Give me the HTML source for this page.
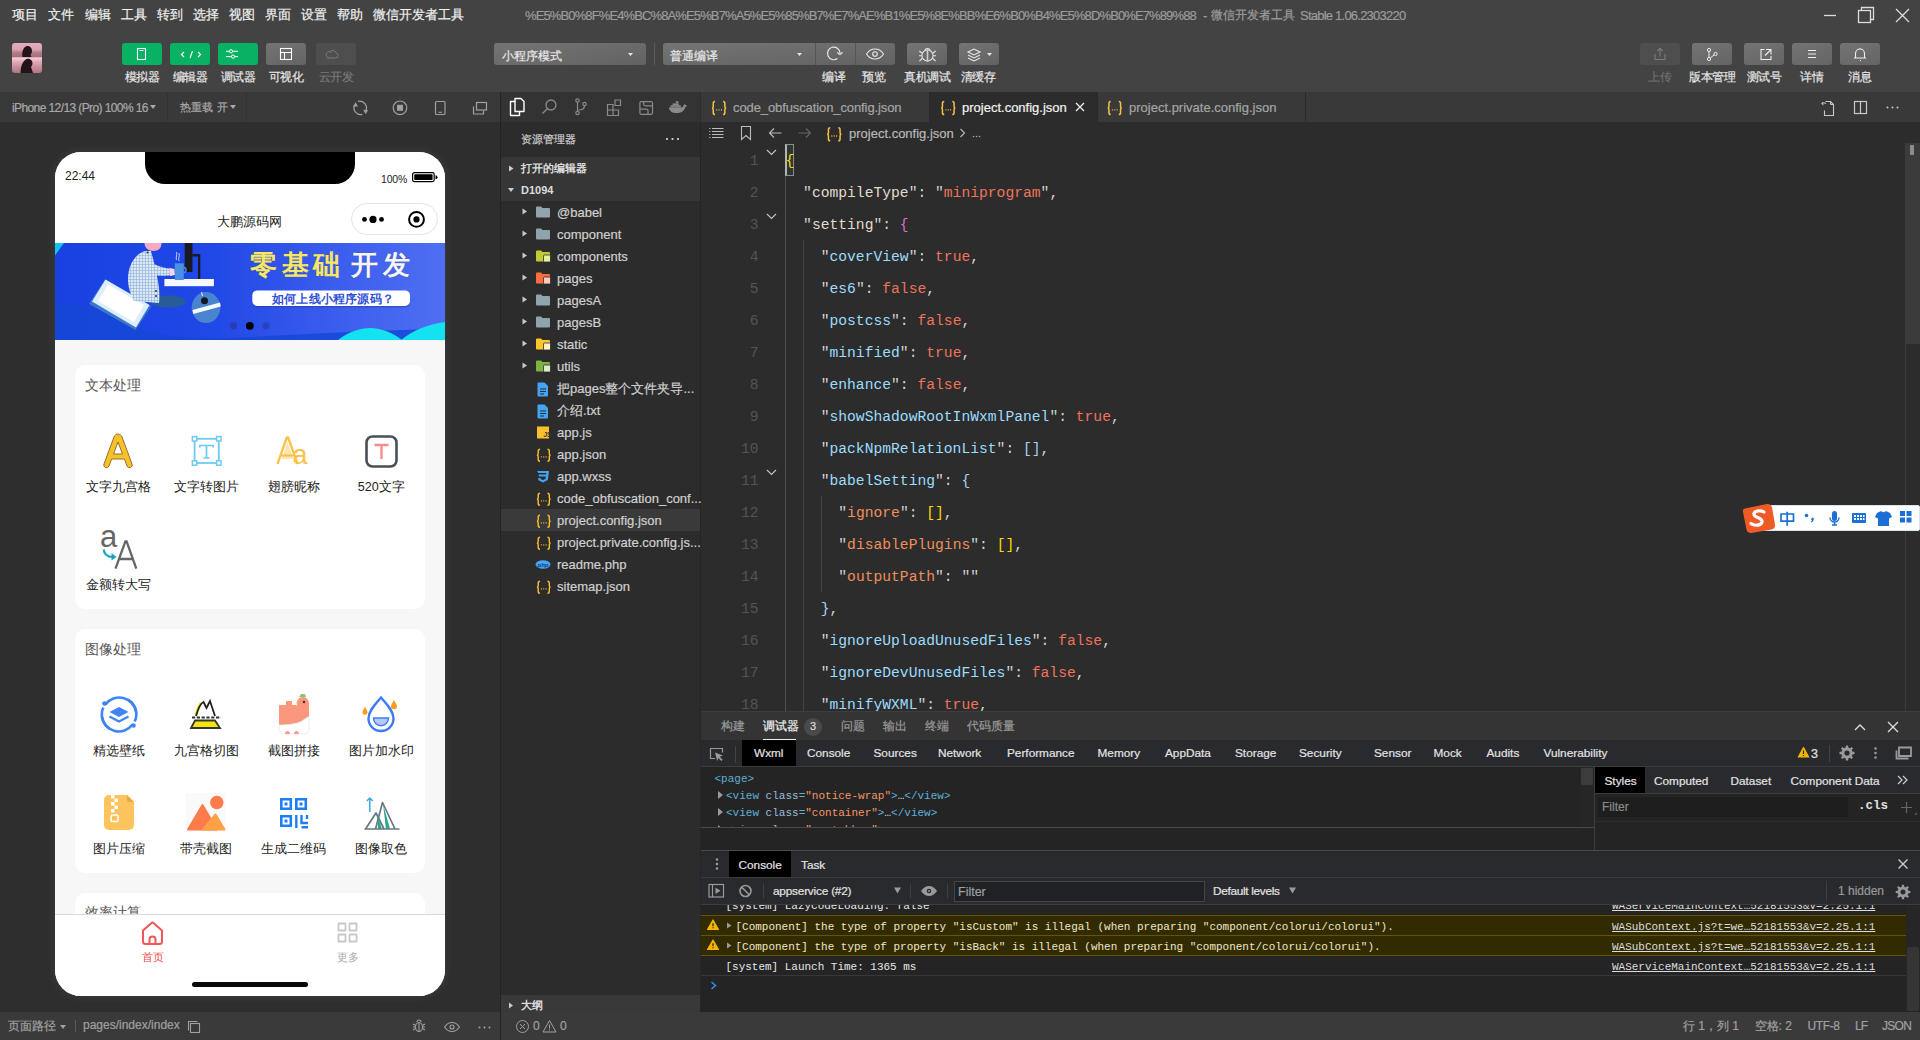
<!DOCTYPE html>
<html><head><meta charset="utf-8">
<style>
*{box-sizing:border-box;margin:0;padding:0}
html,body{width:1920px;height:1040px;overflow:hidden;background:#2c2c2c;font-family:"Liberation Sans",sans-serif;color:#ccc}
.a{position:absolute}
.t{position:absolute;white-space:nowrap;line-height:1;-webkit-text-stroke:.2px currentColor}
svg{position:absolute;overflow:visible}
.t[style*="bold"],.ph .t{-webkit-text-stroke:0}
.cl{width:87.5px;text-align:center;font-size:12.5px;color:#222}
.cl2{position:absolute;white-space:pre;font-family:"Liberation Mono",monospace;font-size:14.67px;line-height:32px;color:#d4d4d4}
.ln{position:absolute;left:700px;width:58.5px;text-align:right;font-family:"Liberation Mono",monospace;font-size:14.67px;line-height:32px;color:#545454}
.dt{position:absolute;top:748px;white-space:nowrap;line-height:1;font-size:11.8px;color:#e3e3e3;-webkit-text-stroke:.2px currentColor}
.wx{position:absolute;white-space:pre;font-family:"Liberation Mono",monospace;font-size:11px;line-height:1}
.tg{color:#5db0d7}.an{color:#9bbbdc}.av{color:#f29766}
.cm{position:absolute;white-space:pre;font-family:"Liberation Mono",monospace;font-size:10.97px;line-height:1;color:#e6e6e6}
.lk{text-decoration:underline;color:#dcdcdc}
.mono{font-family:"Liberation Mono",monospace}
</style></head><body>
<!-- STATUS -->
<div class="a" style="left:0;top:1012px;width:1920px;height:28px;background:#3a3a3a"></div>


<!-- TOP BAR -->
<div class="a" style="left:0;top:0;width:1920px;height:92px;background:#434343"></div>
<div class="t" style="left:12px;top:8px;font-size:13px;color:#f0f0f0;word-spacing:0">
<span style="position:absolute;left:0">项目</span><span style="position:absolute;left:36px">文件</span><span style="position:absolute;left:73px">编辑</span><span style="position:absolute;left:109px">工具</span><span style="position:absolute;left:145px">转到</span><span style="position:absolute;left:181px">选择</span><span style="position:absolute;left:217px">视图</span><span style="position:absolute;left:253px">界面</span><span style="position:absolute;left:289px">设置</span><span style="position:absolute;left:325px">帮助</span><span style="position:absolute;left:361px">微信开发者工具</span>
</div>
<div class="t" id="title" style="left:525px;top:9px;font-size:13px;color:#9c9c9c;letter-spacing:-0.88px">%E5%B0%8F%E4%BC%8A%E5%B7%A5%E5%85%B7%E7%AE%B1%E5%8E%BB%E6%B0%B4%E5%8D%B0%E7%89%88</div>
<div class="t" id="title2" style="left:1203px;top:9px;font-size:13px;color:#9c9c9c">-</div>
<div class="t" style="left:1211px;top:9px;font-size:12px;color:#9c9c9c">微信开发者工具</div>
<div class="t" id="title3" style="left:1300px;top:9px;font-size:13px;color:#9c9c9c;letter-spacing:-0.77px">Stable 1.06.2303220</div>
<!-- window controls -->
<svg style="left:1820px;top:5px" width="100" height="20">
<path d="M4 10.5h12" stroke="#ddd" stroke-width="1.3"/>
<rect x="38.5" y="5.5" width="12" height="12" fill="none" stroke="#ddd" stroke-width="1.3"/>
<path d="M41.5 5.5v-3h12v12h-3" fill="none" stroke="#ddd" stroke-width="1.3"/>
<path d="M76 4l13 13M89 4l-13 13" stroke="#ddd" stroke-width="1.3"/>
</svg>
<!-- avatar -->
<div class="a" style="left:12px;top:43px;width:30px;height:30px;border-radius:3px;overflow:hidden;background:linear-gradient(180deg,#e4b0bd 0%,#d8a2b2 22%,#b27c8a 32%,#a86e7c 45%,#f4d0d0 50%,#e3aab8 62%,#c88e9c 80%,#b27482 100%)">
<svg style="left:0;top:0" width="30" height="30">
<path d="M10.5 14c-1-4 .5-10 4.5-11 3-.5 5 2 5 5 0 2-1 3-1.5 4l1 2z" fill="#241419"/>
<path d="M8.5 30c0-6 2-12 6-14 4-1 6 2 6 4.5 0 1.5-1 2.5-1.5 3.5l2 6z" fill="#241419"/>
</svg>
</div>
<!-- left green buttons -->
<div class="a" style="left:122px;top:43px;width:40px;height:22px;border-radius:3px;background:#08b163"></div>
<div class="a" style="left:170px;top:43px;width:40px;height:22px;border-radius:3px;background:#08b163"></div>
<div class="a" style="left:218px;top:43px;width:40px;height:22px;border-radius:3px;background:#08b163"></div>
<div class="a" style="left:266px;top:43px;width:40px;height:22px;border-radius:3px;background:linear-gradient(160deg,#747474,#646464)"></div>
<div class="a" style="left:316px;top:43px;width:40px;height:22px;border-radius:3px;background:#4e4e4e"></div>
<svg style="left:122px;top:43px" width="240" height="22">
<rect x="15.5" y="5.5" width="8" height="11" fill="none" stroke="#fff" stroke-width="1.1"/><path d="M17.5 7.5h4" stroke="#fff" stroke-width="1"/>
<path d="M62 9l-2.5 2.5 2.5 2.5M76 9l2.5 2.5-2.5 2.5M70.5 8l-2.5 7" fill="none" stroke="#fff" stroke-width="1.1"/>
<circle cx="109" cy="8.3" r="1.6" fill="none" stroke="#fff" stroke-width="1"/><path d="M110.6 8.3h5.4M104 13.6h5.4" stroke="#fff" stroke-width="1"/><circle cx="111" cy="13.6" r="1.6" fill="none" stroke="#fff" stroke-width="1"/><path d="M104 8.3h3.4M112.6 13.6h3.4" stroke="#fff" stroke-width="1"/>
<rect x="158.5" y="5.5" width="11" height="11" fill="none" stroke="#fff" stroke-width="1.1"/><path d="M158.5 9.5h11M162.5 9.5v7" stroke="#fff" stroke-width="1.1"/>
<path d="M205 15h8.5a2.6 2.6 0 0 0 .3-5.2 3.2 3.2 0 0 0-6-.6M207 15a3.2 3.2 0 1 1 2.5-5.5" fill="none" stroke="#7a7a7a" stroke-width="1"/>
</svg>
<div class="t" style="left:122px;top:71px;width:40px;text-align:center;font-size:12px;color:#e6e6e6;letter-spacing:-.5px">模拟器</div>
<div class="t" style="left:170px;top:71px;width:40px;text-align:center;font-size:12px;color:#e6e6e6;letter-spacing:-.5px">编辑器</div>
<div class="t" style="left:218px;top:71px;width:40px;text-align:center;font-size:12px;color:#e6e6e6;letter-spacing:-.5px">调试器</div>
<div class="t" style="left:266px;top:71px;width:40px;text-align:center;font-size:12px;color:#e6e6e6;letter-spacing:-.5px">可视化</div>
<div class="t" style="left:316px;top:71px;width:40px;text-align:center;font-size:12px;color:#777;letter-spacing:-.5px">云开发</div>
<!-- mode dropdown -->
<div class="a" style="left:494px;top:43px;width:152px;height:22px;border-radius:3px;background:linear-gradient(170deg,#747474,#626262)"></div>
<div class="t" style="left:502px;top:49.5px;font-size:12px;color:#e8e8e8">小程序模式</div>
<svg style="left:628px;top:53px" width="8" height="5"><path d="M0 0h5l-2.5 3z" fill="#e8e8e8"/></svg>
<div class="a" style="left:654px;top:43px;width:1px;height:22px;background:#5a5a5a"></div>
<div class="a" style="left:663px;top:43px;width:232px;height:22px;border-radius:3px;background:linear-gradient(175deg,#747474,#626262)"></div>
<div class="a" style="left:815px;top:43px;width:1px;height:22px;background:#555"></div>
<div class="a" style="left:855px;top:43px;width:1px;height:22px;background:#555"></div>
<div class="t" style="left:670px;top:49.5px;font-size:12px;color:#e8e8e8">普通编译</div>
<svg style="left:797px;top:53px" width="8" height="5"><path d="M0 0h5l-2.5 3z" fill="#e8e8e8"/></svg>
<svg style="left:815px;top:43px" width="80" height="22">
<path d="M22.4 15.6A6.3 6.3 0 1 1 25.1 10.2" fill="none" stroke="#e8e8e8" stroke-width="1.2"/><path d="M22.2 9.6l2.8 2 2.6-2.3" fill="none" stroke="#e8e8e8" stroke-width="1.2"/>
<path d="M51.5 11c2.2-3.5 5-5 8.5-5s6.3 1.5 8.5 5c-2.2 3.5-5 5-8.5 5s-6.3-1.5-8.5-5z" fill="none" stroke="#e8e8e8" stroke-width="1.1"/><circle cx="60" cy="11" r="2.3" fill="none" stroke="#e8e8e8" stroke-width="1.1"/>
</svg>
<div class="a" style="left:907px;top:43px;width:40px;height:22px;border-radius:3px;background:linear-gradient(160deg,#747474,#626262)"></div>
<svg style="left:906.5px;top:43px" width="41" height="22">
<circle cx="20.5" cy="12.5" r="5.6" fill="none" stroke="#e8e8e8" stroke-width="1.1"/><path d="M20.5 7.2v10.6" stroke="#d0d0d0" stroke-width="1.6"/><path d="M17.8 7.3a2.8 2.5 0 0 1 5.4 0M14.9 10l-2.6-2M14.9 12.8h-2.9M15.2 15.5l-2.8 2.6M26.1 10l2.6-2M26.1 12.8h2.9M25.8 15.5l2.8 2.6" fill="none" stroke="#e8e8e8" stroke-width="1.1"/>
</svg>
<div class="a" style="left:959px;top:43px;width:40px;height:22px;border-radius:3px;background:linear-gradient(160deg,#747474,#626262)"></div>
<svg style="left:959px;top:43px" width="40" height="22">
<path d="M9 9l6-3 6 3-6 3z" fill="none" stroke="#e8e8e8" stroke-width="1.1"/><path d="M9 12l6 3 6-3M9 15l6 3 6-3" fill="none" stroke="#e8e8e8" stroke-width="1.1"/><path d="M28 10h5l-2.5 3z" fill="#e8e8e8"/>
</svg>
<div class="t" style="left:814px;top:71px;width:40px;text-align:center;font-size:12px;color:#e6e6e6">编译</div>
<div class="t" style="left:854px;top:71px;width:40px;text-align:center;font-size:12px;color:#e6e6e6">预览</div>
<div class="t" style="left:897px;top:71px;width:60px;text-align:center;font-size:12px;color:#e6e6e6;letter-spacing:-.5px">真机调试</div>
<div class="t" style="left:948px;top:71px;width:60px;text-align:center;font-size:12px;color:#e6e6e6;letter-spacing:-.5px">清缓存</div>
<!-- right buttons -->
<div class="a" style="left:1640px;top:43px;width:40px;height:22px;border-radius:3px;background:#4e4e4e"></div>
<div class="a" style="left:1692px;top:43px;width:40px;height:22px;border-radius:3px;background:linear-gradient(160deg,#747474,#646464)"></div>
<div class="a" style="left:1744px;top:43px;width:40px;height:22px;border-radius:3px;background:linear-gradient(160deg,#747474,#646464)"></div>
<div class="a" style="left:1792px;top:43px;width:40px;height:22px;border-radius:3px;background:linear-gradient(160deg,#747474,#646464)"></div>
<div class="a" style="left:1840px;top:43px;width:40px;height:22px;border-radius:3px;background:linear-gradient(160deg,#747474,#646464)"></div>
<svg style="left:1640px;top:43px" width="240" height="22">
<path d="M15 11v5.5h10V11M20 5.5v8M17.3 8l2.7-2.7 2.7 2.7" fill="none" stroke="#7c7c7c" stroke-width="1.1"/>
<circle cx="69" cy="7" r="1.6" fill="none" stroke="#eee" stroke-width="1"/><circle cx="69" cy="16" r="1.6" fill="none" stroke="#eee" stroke-width="1"/><circle cx="75.5" cy="11" r="1.6" fill="none" stroke="#eee" stroke-width="1"/><path d="M69 8.6v5.8M70.3 14.8l3.8-2.8" fill="none" stroke="#eee" stroke-width="1"/>
<path d="M124.5 6.5h-3.5v10h10V13M126 6.5h5v5M131 6.5l-6 6" fill="none" stroke="#eee" stroke-width="1.1"/>
<path d="M168 7.5h8M168 11h8M168 14.5h8" stroke="#eee" stroke-width="1.1"/>
<path d="M215.5 15V10.5a4.5 4.5 0 0 1 9 0V15h1.5h-12zM220 17.5h1M220 5v1" fill="none" stroke="#eee" stroke-width="1.1"/>
</svg>
<div class="t" style="left:1640px;top:71px;width:40px;text-align:center;font-size:12px;color:#6f6f6f">上传</div>
<div class="t" style="left:1682px;top:71px;width:60px;text-align:center;font-size:12px;color:#e6e6e6;letter-spacing:-.5px">版本管理</div>
<div class="t" style="left:1734px;top:71px;width:60px;text-align:center;font-size:12px;color:#e6e6e6;letter-spacing:-.5px">测试号</div>
<div class="t" style="left:1792px;top:71px;width:40px;text-align:center;font-size:12px;color:#e6e6e6">详情</div>
<div class="t" style="left:1840px;top:71px;width:40px;text-align:center;font-size:12px;color:#e6e6e6">消息</div>


<!-- SIM PANEL -->
<div class="a" style="left:0;top:92px;width:500px;height:30px;background:#393939"></div>
<div class="a" style="left:0;top:122px;width:500px;height:890px;background:#2e2e2e"></div>
<div class="a" style="left:500px;top:92px;width:1px;height:948px;background:#232323"></div>
<div class="t" id="simdev" style="left:12px;top:102px;font-size:12px;color:#a9a9a9;letter-spacing:-0.6px">iPhone 12/13 (Pro) 100% 16</div>
<svg style="left:150px;top:105px" width="8" height="5"><path d="M0 0h6l-3 4z" fill="#a9a9a9"/></svg>
<div class="a" style="left:167px;top:92px;width:1px;height:30px;background:#333"></div>
<div class="t" style="left:180px;top:101.5px;font-size:11.2px;color:#a9a9a9;letter-spacing:.2px">热重载 开</div>
<svg style="left:230px;top:105px" width="8" height="5"><path d="M0 0h6l-3 4z" fill="#a9a9a9"/></svg>
<div class="a" style="left:246px;top:92px;width:1px;height:30px;background:#333"></div>
<svg style="left:340px;top:92px" width="160" height="30">
<path d="M14.6 13A6.7 6.7 0 0 0 22.3 22.3M18 9.4A6.7 6.7 0 0 1 25.4 19.4" fill="none" stroke="#a0a0a0" stroke-width="1.2"/><path d="M13 14.5l2.6-4.3 2.4 4.3zM23.3 17.8l2.4 4.4 2.3-4.3z" fill="#a0a0a0"/>
<circle cx="60" cy="15.8" r="6.8" fill="none" stroke="#a0a0a0" stroke-width="1.2"/><rect x="57" y="12.8" width="6" height="6" fill="#a0a0a0"/>
<rect x="95.5" y="9.5" width="9.5" height="13" rx="1" fill="none" stroke="#a0a0a0" stroke-width="1.2"/><path d="M98.5 20.3h3.5" stroke="#a0a0a0" stroke-width="1.1"/>
<rect x="136.5" y="10.5" width="10" height="7.5" fill="none" stroke="#a0a0a0" stroke-width="1.2"/><path d="M133.5 14.5v7.5h10v-3.5" fill="none" stroke="#a0a0a0" stroke-width="1.2"/>
</svg>
<!-- phone -->
<div class="a ph" style="left:55px;top:152px;width:390px;height:844px;border-radius:26px;background:#f7f7f7;overflow:hidden;box-shadow:0 0 10px 1px rgba(255,255,255,.07)">
 <div class="a" style="left:0;top:0;width:390px;height:91px;background:#fff"></div>
 <div class="a" style="left:90px;top:0;width:210px;height:32px;background:#000;border-radius:0 0 20px 20px"></div>
 <div class="t" style="left:10px;top:18px;font-size:12px;color:#222">22:44</div>
 <div class="t" style="left:326px;top:21.5px;font-size:10.5px;color:#222;letter-spacing:-.2px">100%</div>
 <svg style="left:357px;top:20px" width="30" height="12">
 <rect x="0.6" y="0.6" width="21.6" height="9" rx="1.8" fill="none" stroke="#000" stroke-width="1.2"/><rect x="2.2" y="2.2" width="18.4" height="5.8" rx=".7" fill="#000"/><path d="M23.5 3.3a1.6 1.6 0 0 1 0 4z" fill="#000"/>
 </svg>
 <div class="t" style="left:162px;top:63px;font-size:13px;color:#222">大鹏源码网</div>
 <div class="a" style="left:296px;top:51px;width:87px;height:32px;border-radius:16px;border:1px solid #e4e4e4;background:#fff"></div>
 <svg style="left:296px;top:51px" width="87" height="32">
 <circle cx="13.5" cy="16.4" r="2.4" fill="#000"/><circle cx="22" cy="16.4" r="3.6" fill="#000"/><circle cx="30.5" cy="16.4" r="2.4" fill="#000"/>
 <path d="M43.5 6v20" stroke="#e4e4e4" stroke-width="0"/>
 <circle cx="65.5" cy="16.4" r="7.4" fill="none" stroke="#000" stroke-width="2"/><circle cx="65.5" cy="16.4" r="3.1" fill="#000"/>
 </svg>
 <!-- banner -->
 <div class="a" style="left:0;top:91px;width:390px;height:97px;overflow:hidden;background:linear-gradient(90deg,#1a40e2 0%,#2048e6 40%,#3a5ced 70%,#4e6ff2 100%)">
 <svg style="left:0;top:0" width="390" height="97">
  <defs><pattern id="chk" width="3" height="3" patternUnits="userSpaceOnUse"><path d="M0 0h3v3H0z" fill="#dce8f6"/><path d="M0 .5h3M.5 0v3" stroke="#8fb0d8" stroke-width=".6"/></pattern></defs>
  <path d="M0 0h9L0 12.5z" fill="#14c2f2"/>
  <path d="M0 59c25 2 50 10 75 22 25 12 60 16 100 14 60-3 140-8 215-9V97H0z" fill="#1548d6" opacity=".85"/>
  <!-- laptop -->
  <path d="M34 61l16-24.5 46.5 26.5-16 24z" fill="#3a78c8"/>
  <path d="M37 58.5l13.5-22 44 25.5-13.5 22.5z" fill="#dceefe"/>
  <path d="M43 58l10-16.5 36 20.5-10 17z" fill="#fff"/>
  <!-- shadow seat -->
  <ellipse cx="113" cy="58.5" rx="17.5" ry="6.2" fill="#275c98"/>
  <!-- person -->
  <path d="M89.5 0h17c0 5-3 8-8 8s-9-3-9-8z" fill="#f4a9c4"/>
  <path d="M90 8c-10 3-17 14-17 28 0 9 3 17 6 22l25 2c1-8 0-18-2-27-2-9-4-18-6-25z" fill="url(#chk)"/>
  <path d="M89 14c6 6 14 10 28 12l2 6c-14 2-24 0-32-4z" fill="url(#chk)"/>
  <circle cx="92.5" cy="9.5" r="1" fill="#333"/><circle cx="101" cy="48" r="1" fill="#333"/><circle cx="101" cy="53" r="1" fill="#333"/>
  <path d="M114.5 25l5 1 .5 6-5 1z" fill="#f6d5de"/>
  <!-- desk / monitor -->
  <path d="M129.7 0h7.8v29h-7.8z" fill="#1b1a24"/>
  <path d="M137.5 11h7.8v25h-2.3V13.5h-5.5z" fill="#1b1a24"/>
  <rect x="109.4" y="36" width="49.5" height="7.2" fill="#f5f8ff"/>
  <path d="M119.8 20.3h9v16.7h-9z" fill="#4a90e2"/><path d="M128.8 24.5c3 0 3 5 0 5" fill="none" stroke="#4a90e2" stroke-width="1.3"/>
  <path d="M121.5 17c-1-3 1-5 0-8M124 18c-1-3 1-5 0-8" fill="none" stroke="#dfe9ff" stroke-width=".8"/>
  <!-- ball -->
  <ellipse cx="151" cy="64.6" rx="14.3" ry="15.5" fill="#4a84d0"/>
  <path d="M137.5 67l27.5-7.5 .8 4-27.5 7.5z" fill="#f4f8ff"/>
  <circle cx="149.5" cy="57.8" r="3.5" fill="#17171f"/>
  <path d="M146.5 49l1 4" stroke="#eef" stroke-width="1"/>
  <!-- cyan bumps -->
  <path d="M283 97c10-8 22-12 32-12s22 4 32 12z" fill="#14e2f0"/>
  <path d="M346 97c12-10 28-16 44-18v18z" fill="#14e2f0"/>
  <!-- text -->
  <g font-size="27" font-weight="bold" letter-spacing="4.5" style="paint-order:stroke" stroke="#5a5000" stroke-opacity=".25" stroke-width="1">
  <text x="195" y="31" fill="#f6e66a">零基础</text>
  <text x="296" y="31" fill="#f4f4fa">开发</text>
  </g>
  <rect x="197.3" y="49" width="157.7" height="15.6" rx="5" fill="#2838a8" opacity=".5"/>
  <rect x="197.3" y="47.4" width="157.7" height="15.6" rx="5" fill="#fff"/>
  <text x="278" y="59.6" font-size="11.6" font-weight="bold" fill="#2f4fd6" text-anchor="middle" letter-spacing=".2">如何上线小程序源码？</text>
  <circle cx="178.6" cy="82.8" r="3.6" fill="#2a3cb4"/><circle cx="194.8" cy="82.8" r="3.9" fill="#000"/><circle cx="210.8" cy="82.8" r="3.6" fill="#2c42bc"/>
 </svg>
 </div>
 <!-- card 1 -->
 <div class="a" style="left:20px;top:213px;width:350px;height:244px;border-radius:10px;background:#fff"></div>
 <div class="t" style="left:30px;top:227px;font-size:13.5px;color:#555">文本处理</div>
 <div class="t cl" style="left:20px;top:329px">文字九宫格</div>
 <div class="t cl" style="left:107.5px;top:329px">文字转图片</div>
 <div class="t cl" style="left:195px;top:329px">翅膀昵称</div>
 <div class="t cl" style="left:282.5px;top:329px">520文字</div>
 <div class="t cl" style="left:20px;top:427px">金额转大写</div>
 <svg style="left:20px;top:270px" width="350" height="150">
  <path transform="translate(8,3)" d="M31 12l-10 27a2.6 2.6 0 0 0 5 2l2.6-7h12.8l2.6 7a2.6 2.6 0 0 0 5-2L39 12c-1.5-4-6.5-4-8 0zM30.5 29l4.5-12 4.5 12z" fill="#f7c324" stroke="#9a6b3a" stroke-width="1"/>
  <rect x="119.6" y="16.8" width="24.2" height="24.2" fill="none" stroke="#6ccaf6" stroke-width="1.8"/>
  <rect x="117.4" y="14.6" width="4.4" height="4.4" fill="#fff" stroke="#6ccaf6" stroke-width="1.5"/><rect x="141.6" y="14.6" width="4.4" height="4.4" fill="#fff" stroke="#6ccaf6" stroke-width="1.5"/><rect x="117.4" y="38.8" width="4.4" height="4.4" fill="#fff" stroke="#6ccaf6" stroke-width="1.5"/><rect x="141.6" y="38.8" width="4.4" height="4.4" fill="#fff" stroke="#6ccaf6" stroke-width="1.5"/>
  <path d="M124.8 23.5h13.4M131.5 23.5v12.6M128.5 36h6M124.8 23v2.6M138.2 23v2.6" stroke="#6ccaf6" stroke-width="1.7" fill="none"/>
  <path d="M202.5 42l9.3-26.5h1.4L222.5 42" fill="none" stroke="#fbc24a" stroke-width="2.3" stroke-linejoin="round"/>
  <path d="M212.5 20l-6 17h12z" fill="#fde3b0"/>
  <path d="M206 33.5h13" stroke="#fbc24a" stroke-width="2"/>
  <text x="217.5" y="42" font-size="27" fill="#fbc24a" font-family="Liberation Sans">a</text>
  <rect x="291.5" y="14.5" width="30" height="30" rx="6" fill="none" stroke="#4b5058" stroke-width="2.6"/>
  <path d="M299.5 23h14M306.5 23v14" stroke="#fb8b8b" stroke-width="2.4"/>
 </svg>
 <svg style="left:20px;top:370px" width="100" height="60">
  <text x="25" y="24.6" font-size="31" fill="#666" font-family="Liberation Sans">a</text>
  <path d="M40.5 46.7L50.4 19.3h1.2l9.7 27.4M44 37h14.5" fill="none" stroke="#666" stroke-width="2.3"/>
  <path d="M28.8 27.5c0 4 3.5 7.5 8.5 7.5" fill="none" stroke="#1aa3bf" stroke-width="2.2"/><path d="M36.5 31l5 4-5 3.5z" fill="#1aa3bf"/>
 </svg>
 <!-- card 2 -->
 <div class="a" style="left:20px;top:477px;width:350px;height:244px;border-radius:10px;background:#fff"></div>
 <div class="t" style="left:30px;top:491px;font-size:13.5px;color:#555">图像处理</div>
 <div class="t cl" style="left:20px;top:593px">精选壁纸</div>
 <div class="t cl" style="left:107.5px;top:593px">九宫格切图</div>
 <div class="t cl" style="left:195px;top:593px">截图拼接</div>
 <div class="t cl" style="left:282.5px;top:593px">图片加水印</div>
 <div class="t cl" style="left:20px;top:691px">图片压缩</div>
 <div class="t cl" style="left:107.5px;top:691px">带壳截图</div>
 <div class="t cl" style="left:195px;top:691px">生成二维码</div>
 <div class="t cl" style="left:282.5px;top:691px">图像取色</div>
 <svg style="left:20px;top:530px" width="350" height="160">
  <!-- wallpaper -->
  <path d="M30.5 22.5A17 17 0 0 1 61 30M57.5 42.5A17 17 0 0 1 27 35" fill="none" stroke="#3f84f6" stroke-width="2.6"/>
  <path d="M28.3 25.5A17 17 0 0 0 35 47M59.7 39.5A17 17 0 0 0 53 17.5" fill="none" stroke="#3f84f6" stroke-width="2.6" stroke-dasharray="0"/>
  <circle cx="29.5" cy="21.5" r="2.3" fill="#3f84f6"/><circle cx="58.5" cy="43.5" r="2.3" fill="#3f84f6"/>
  <path d="M34.5 30l9.5-5 9.5 5-9.5 5z" fill="#3f84f6"/><path d="M34.5 34.5l9.5 5 9.5-5" fill="none" stroke="#3f84f6" stroke-width="2.2"/>
  <!-- nine grid cut -->
  <path d="M121 33c1.5-5 3-9 5-12" fill="none" stroke="#f5e50a" stroke-width="3"/>
  <path d="M121 34c2-7 5-13 7.5-14l3 6 3.5-7 5 15" fill="none" stroke="#222" stroke-width="1.8"/>
  <path d="M120 38.5h20l5 7.5h-29z" fill="#f5e50a" stroke="#333" stroke-width="1.8"/>
  <path d="M117 35.5h29" stroke="#333" stroke-width="1.8" stroke-dasharray="3.2 1.6"/>
  <!-- chicken -->
  <path d="M204 23h7v-4h6v4h5v-2c0-4 3-6 6-6s6 3 6 6v24h-30z" fill="#fb977c"/>
  <path d="M204 43c8 0 18-1 23-4 3-2 5-4 7-4v12a5 5 0 0 1-5 5h-20a5 5 0 0 1-5-5z" fill="#fff" stroke="#e8e8e8" stroke-width=".8"/>
  <path d="M210 52c0-4 5-4 5 0zM219 52c0-4 5-4 5 0z" fill="#f59a92"/>
  <circle cx="229" cy="20" r="1.2" fill="#333"/><path d="M224 15l2-3h4l1 3z" fill="#8cc47a"/><path d="M221 21h2M221 24h2" stroke="#f6c342" stroke-width="1"/>
  <!-- watermark -->
  <path d="M306 15.5c-5 6-12.5 13-12.5 21a12.5 12.5 0 0 0 25 0c0-8-7.5-15-12.5-21z" fill="none" stroke="#3f7bf6" stroke-width="2.4"/>
  <path d="M298.5 36h15c0 4.5-3.5 7.7-7.5 7.7s-7.5-3.2-7.5-7.7z" fill="#b3c9fb" stroke="#3f7bf6" stroke-width="1.4"/>
  <path d="M290 25c-1.3 2.3-2.5 4-2.5 5.3a2.5 2.5 0 0 0 5 0c0-1.3-1.2-3-2.5-5.3zM319 18c-1.5 3-3 4.7-3 6.2a3 3 0 0 0 6 0c0-1.5-1.5-3.2-3-6.2z" fill="#fb9a1c"/>
  <!-- zip -->
  <path d="M34 113h18l7 7v23a5 5 0 0 1-5 5H34a5 5 0 0 1-5-5v-25a5 5 0 0 1 5-5z" fill="#fdc35c"/>
  <path d="M52 113l7 7h-5a2 2 0 0 1-2-2z" fill="#f3a73b"/>
  <path d="M36 113h3.5v3.5H36zM39.5 116.5H43V120h-3.5zM36 120h3.5v3.5H36zM39.5 123.5H43V127h-3.5zM36 127h3.5v3.5H36z" fill="#fff"/><rect x="36" y="133" width="7" height="6.5" rx="1.5" fill="none" stroke="#fff" stroke-width="1.5"/>
  <!-- mountains -->
  <rect x="111" y="111" width="40" height="39" fill="#fafafa"/>
  <circle cx="141.8" cy="120.5" r="6.7" fill="#fd7b4d"/>
  <path d="M113 147.5l14.5-24.5 14.5 24.5z" fill="#fd7a4b" stroke="#fd7a4b" stroke-linejoin="round" stroke-width="2"/>
  <path d="M128 147.5l12.5-15 9 15z" fill="#fea046" stroke="#fea046" stroke-linejoin="round" stroke-width="2"/>
  <!-- qr -->
  <path d="M206.3 117.3h9.5v9.5h-9.5zM221.3 117.3h9.5v9.5h-9.5zM206.3 134.3h9.5v9.5h-9.5z" fill="none" stroke="#1f7ff1" stroke-width="2.6"/>
  <path d="M209.5 120.5h3v3h-3zM224.5 120.5h3v3h-3zM209.5 137.5h3v3h-3z" fill="#1f7ff1"/>
  <path d="M221.3 133v13M226.5 133v8h6.5M226.5 145.2h6.5M232 133v4" fill="none" stroke="#1f7ff1" stroke-width="2.4"/>
  <!-- color pick -->
  <path d="M300.5 147l7-26.5 12.5 26.5" fill="none" stroke="#6b7680" stroke-width="1.7" stroke-linejoin="round"/>
  <path d="M290.5 147l10.5-16 8 16" fill="none" stroke="#6b7680" stroke-width="1.7" stroke-linejoin="round"/>
  <path d="M308 122l3 25h4z" fill="#2aa88e"/><path d="M302 132l1 15h4z" fill="#2aa88e"/>
  <path d="M289.5 147h35" stroke="#6b7680" stroke-width="1.7"/>
  <path d="M294.8 130V116M291.8 119l3-3 3 3" fill="none" stroke="#3aa9e0" stroke-width="1.5"/>
 </svg>
 <!-- card 3 -->
 <div class="a" style="left:20px;top:741px;width:350px;height:120px;border-radius:10px;background:#fff"></div>
 <div class="t" style="left:30px;top:754px;font-size:13.5px;color:#555">效率计算</div>
 <!-- tabbar -->
 <div class="a" style="left:0;top:762px;width:390px;height:82px;background:#fff;border-top:1px solid #d9d9d9"></div>
 <svg style="left:0;top:762px" width="390" height="82">
  <path d="M88 16.5l8.5-7.5a1.5 1.5 0 0 1 2 0l8.5 7.5v11a2.5 2.5 0 0 1-2.5 2.5h-14a2.5 2.5 0 0 1-2.5-2.5z" fill="none" stroke="#f45656" stroke-width="2" stroke-linejoin="round"/>
  <path d="M94.5 30v-4.5a3 3 0 0 1 6 0V30" fill="none" stroke="#f45656" stroke-width="2"/>
  <path d="M283.5 9.5h7v7h-7zM294.5 9.5h7v7h-7zM283.5 20.5h7v7h-7zM294.5 20.5h7v7h-7z" fill="none" stroke="#c8c8c8" stroke-width="1.8" stroke-linejoin="round"/>
 </svg>
 <div class="t" style="left:87px;top:800px;font-size:10.5px;color:#f04848">首页</div>
 <div class="t" style="left:282px;top:800px;font-size:10.5px;color:#aaa">更多</div>
 <div class="a" style="left:137px;top:830px;width:116px;height:5px;border-radius:3px;background:#0a0a0a"></div>
</div>
<!-- sim status -->
<div class="t" style="left:8px;top:1020px;font-size:12px;color:#a0a0a0">页面路径</div>
<svg style="left:60px;top:1025px" width="8" height="5"><path d="M0 0h6l-3 4z" fill="#a0a0a0"/></svg>
<div class="a" style="left:75px;top:1020px;width:1px;height:12px;background:#5a5a5a"></div>
<div class="t" id="simpath" style="left:83px;top:1019px;font-size:12px;color:#a0a0a0">pages/index/index</div>
<svg style="left:186px;top:1018px" width="320" height="18">
<rect x="4.5" y="5.5" width="9" height="9" fill="none" stroke="#a0a0a0" stroke-width="1.1"/><path d="M2.5 12.5v-9h9" fill="none" stroke="#a0a0a0" stroke-width="1.1"/>
<ellipse cx="233" cy="9" rx="3.5" ry="4.5" fill="none" stroke="#a0a0a0" stroke-width="1.1"/><path d="M233 4.5v9M227 6l2.5 1.5M239 6l-2.5 1.5M227 9h2.5M239 9h-2.5M227 12l2.5-1.5M239 12l-2.5-1.5M231 4a2 2 0 0 1 4 0" fill="none" stroke="#a0a0a0" stroke-width="1.1"/>
<path d="M258.5 9c2-3 4.5-4.5 7.5-4.5s5.5 1.5 7.5 4.5c-2 3-4.5 4.5-7.5 4.5s-5.5-1.5-7.5-4.5z" fill="none" stroke="#a0a0a0" stroke-width="1.1"/><circle cx="266" cy="9" r="2" fill="none" stroke="#a0a0a0" stroke-width="1.1"/>
<circle cx="293.5" cy="9.5" r="1" fill="#a0a0a0"/><circle cx="298.5" cy="9.5" r="1" fill="#a0a0a0"/><circle cx="303.5" cy="9.5" r="1" fill="#a0a0a0"/>
</svg>

<!-- EXPLORER -->
<div class="a" style="left:501px;top:92px;width:199px;height:30px;background:#333"></div>
<div class="a" style="left:501px;top:122px;width:199px;height:873px;background:#2c2c2c"></div>
<div class="a" style="left:501px;top:157px;width:199px;height:44px;background:#363636"></div>
<div class="a" style="left:501px;top:509px;width:199px;height:22px;background:#3a3a3a"></div>
<div class="a" style="left:501px;top:995px;width:199px;height:17px;background:#393939"></div>
<div class="a" style="left:700px;top:122px;width:1px;height:890px;background:#262626"></div>
<svg style="left:501px;top:92px" width="199" height="30">
 <g transform="translate(-4,0)"><path d="M13.5 9.5h4.5v-3h6l3 3v10h-4.5v4h-9z" fill="none" stroke="#fff" stroke-width="1.4" stroke-linejoin="round"/>
 <path d="M18 9.5v10h4.5" fill="none" stroke="#fff" stroke-width="1.4"/></g>
 <circle cx="50" cy="13" r="5" fill="none" stroke="#8a8a8a" stroke-width="1.3"/><path d="M46.3 16.7l-4.8 4.8" stroke="#8a8a8a" stroke-width="1.4"/>
 <circle cx="76.5" cy="8.5" r="1.7" fill="none" stroke="#8a8a8a" stroke-width="1.2"/><circle cx="76.5" cy="21" r="1.7" fill="none" stroke="#8a8a8a" stroke-width="1.2"/><circle cx="83.5" cy="12" r="1.7" fill="none" stroke="#8a8a8a" stroke-width="1.2"/><path d="M76.5 10.2v9.1M77.5 18c4 0 6-2 6-4.3" fill="none" stroke="#8a8a8a" stroke-width="1.2"/>
 <path d="M106.5 12.5h5.5v5.5h-5.5zM106.5 18h5.5v5.5h-5.5zM112 18h5.5v5.5H112zM114 8h5.5v5.5H114z" fill="none" stroke="#8a8a8a" stroke-width="1.2"/>
 <rect x="138.9" y="9.7" width="12.6" height="12.6" rx="1.2" fill="none" stroke="#8a8a8a" stroke-width="1.2"/><path d="M142.7 9.7v2.6a1.5 1.5 0 0 0 1.5 1.5h7.1M138.9 17.1h6.6a1.5 1.5 0 0 1 1.5 1.5v3.7" fill="none" stroke="#8a8a8a" stroke-width="1.2"/>
 <path d="M168 15.3h13.6c.6-1.6 1.3-3 2.3-3.4l.6 1.2 1.8.9-1.9.9c-.8 3.6-4.2 6.2-8.8 6.2-4.6 0-7.7-2.3-7.6-5.8z" fill="#8a8a8a"/><rect x="169.6" y="13.2" width="10.2" height="1.7" fill="#8a8a8a"/><rect x="171.6" y="11.4" width="6.2" height="1.6" fill="#8a8a8a"/><rect x="174.8" y="9.2" width="2.6" height="2" fill="#8a8a8a"/>
</svg>
<div class="t" style="left:521px;top:134px;font-size:11px;color:#cfcfcf">资源管理器</div>
<svg style="left:665px;top:137px" width="18" height="4"><circle cx="2" cy="2" r="1.1" fill="#ddd"/><circle cx="7.5" cy="2" r="1.1" fill="#ddd"/><circle cx="13" cy="2" r="1.1" fill="#ddd"/></svg>
<svg style="left:505px;top:157px" width="30" height="44">
 <path d="M4 8.5l4.5 3-4.5 3z" fill="#ccc"/>
 <path d="M3 31h6l-3 4z" fill="#ccc"/>
</svg>
<div class="t" style="left:521px;top:163px;font-size:11px;font-weight:bold;color:#dcdcdc">打开的编辑器</div>
<div class="t" style="left:521px;top:185px;font-size:11px;font-weight:bold;color:#dcdcdc">D1094</div>
<div class="a" id="tree" style="left:501px;top:201px;width:199px;height:396px;font-size:13px;color:#d0d0d0">
<svg style="left:0;top:0" width="199" height="396">
<path d="M21.5 7.5l4.5 3-4.5 3z" fill="#c8c8c8"/>
<path d="M35 6.5a1 1 0 0 1 1-1h4l1.5 1.5h6.5a1 1 0 0 1 1 1v7.5a1 1 0 0 1-1 1H36a1 1 0 0 1-1-1z" fill="#90a4ae"/>
<path d="M21.5 29.5l4.5 3-4.5 3z" fill="#c8c8c8"/>
<path d="M35 28.5a1 1 0 0 1 1-1h4l1.5 1.5h6.5a1 1 0 0 1 1 1v7.5a1 1 0 0 1-1 1H36a1 1 0 0 1-1-1z" fill="#90a4ae"/>
<path d="M21.5 51.5l4.5 3-4.5 3z" fill="#c8c8c8"/>
<path d="M35 50.5a1 1 0 0 1 1-1h4l1.5 1.5h6.5a1 1 0 0 1 1 1v7.5a1 1 0 0 1-1 1H36a1 1 0 0 1-1-1z" fill="#c0ca33"/>
<rect x="42.5" y="54" width="7" height="7" rx="1" fill="#e6ee9c" stroke="#2c2c2c" stroke-width=".8"/>
<path d="M21.5 73.5l4.5 3-4.5 3z" fill="#c8c8c8"/>
<path d="M35 72.5a1 1 0 0 1 1-1h4l1.5 1.5h6.5a1 1 0 0 1 1 1v7.5a1 1 0 0 1-1 1H36a1 1 0 0 1-1-1z" fill="#ff6e40"/>
<rect x="42.5" y="76" width="7" height="7" rx="1" fill="#ffccbc" stroke="#2c2c2c" stroke-width=".8"/>
<path d="M21.5 95.5l4.5 3-4.5 3z" fill="#c8c8c8"/>
<path d="M35 94.5a1 1 0 0 1 1-1h4l1.5 1.5h6.5a1 1 0 0 1 1 1v7.5a1 1 0 0 1-1 1H36a1 1 0 0 1-1-1z" fill="#90a4ae"/>
<path d="M21.5 117.5l4.5 3-4.5 3z" fill="#c8c8c8"/>
<path d="M35 116.5a1 1 0 0 1 1-1h4l1.5 1.5h6.5a1 1 0 0 1 1 1v7.5a1 1 0 0 1-1 1H36a1 1 0 0 1-1-1z" fill="#90a4ae"/>
<path d="M21.5 139.5l4.5 3-4.5 3z" fill="#c8c8c8"/>
<path d="M35 138.5a1 1 0 0 1 1-1h4l1.5 1.5h6.5a1 1 0 0 1 1 1v7.5a1 1 0 0 1-1 1H36a1 1 0 0 1-1-1z" fill="#ffc628"/>
<rect x="42.5" y="142" width="7" height="7" rx="1" fill="#fff3c4" stroke="#2c2c2c" stroke-width=".8"/>
<path d="M21.5 161.5l4.5 3-4.5 3z" fill="#c8c8c8"/>
<path d="M35 160.5a1 1 0 0 1 1-1h4l1.5 1.5h6.5a1 1 0 0 1 1 1v7.5a1 1 0 0 1-1 1H36a1 1 0 0 1-1-1z" fill="#7cb342"/>
<rect x="42.5" y="164" width="7" height="7" rx="1" fill="#dcedc8" stroke="#2c2c2c" stroke-width=".8"/>
<path d="M37.5 181.5h6l3.5 3.5v9.5a1 1 0 0 1-1 1h-8.5a1 1 0 0 1-1-1V182.5a1 1 0 0 1 1-1z" transform="translate(0,0)" fill="#42a5f5"/>
<path d="M39 188h6M39 190.5h6M39 193h4" stroke="#2c2c2c" stroke-width="1.1"/>
<path d="M37.5 203.5h6l3.5 3.5v9.5a1 1 0 0 1-1 1h-8.5a1 1 0 0 1-1-1V204.5a1 1 0 0 1 1-1z" transform="translate(0,0)" fill="#42a5f5"/>
<path d="M39 210h6M39 212.5h6M39 215h4" stroke="#2c2c2c" stroke-width="1.1"/>
<rect x="36" y="225.5" width="12" height="12" fill="#fbc02d"/>
<text x="42.5" y="236" font-size="6.5" font-weight="bold" fill="#333" font-family="Liberation Sans">JS</text>
<path d="M39.01 248.20c-1.3 0-1.8 .6-1.8 1.8v2.85c0 .9-.5 1.4-1.3 1.4c.8 0 1.3 .5 1.3 1.4v2.85c0 1.2 .5 1.8 1.8 1.8M46.49 248.20c1.3 0 1.8 .6 1.8 1.8v2.85c0 .9 .5 1.4 1.3 1.4c-.8 0-1.3 .5-1.3 1.4v2.85c0 1.2-.5 1.8-1.8 1.8" fill="none" stroke="#fbc02d" stroke-width="1.4"/><path d="M39.85 255.78h1M42.25 255.78h1M44.65 255.78h1" stroke="#fbc02d" stroke-width="1.3"/>
<path d="M36 270h12l-1.2 9-4.8 2.5-4.5-2.3-.4-2.2h2.4l.2 1 2.3 1 2.5-1 .4-2.5h-7l-.3-2h7.5l.3-1.5h-8z" fill="#42a5f5"/>
<path d="M39.01 292.20c-1.3 0-1.8 .6-1.8 1.8v2.85c0 .9-.5 1.4-1.3 1.4c.8 0 1.3 .5 1.3 1.4v2.85c0 1.2 .5 1.8 1.8 1.8M46.49 292.20c1.3 0 1.8 .6 1.8 1.8v2.85c0 .9 .5 1.4 1.3 1.4c-.8 0-1.3 .5-1.3 1.4v2.85c0 1.2-.5 1.8-1.8 1.8" fill="none" stroke="#fbc02d" stroke-width="1.4"/><path d="M39.85 299.78h1M42.25 299.78h1M44.65 299.78h1" stroke="#fbc02d" stroke-width="1.3"/>
<path d="M39.01 314.20c-1.3 0-1.8 .6-1.8 1.8v2.85c0 .9-.5 1.4-1.3 1.4c.8 0 1.3 .5 1.3 1.4v2.85c0 1.2 .5 1.8 1.8 1.8M46.49 314.20c1.3 0 1.8 .6 1.8 1.8v2.85c0 .9 .5 1.4 1.3 1.4c-.8 0-1.3 .5-1.3 1.4v2.85c0 1.2-.5 1.8-1.8 1.8" fill="none" stroke="#fbc02d" stroke-width="1.4"/><path d="M39.85 321.78h1M42.25 321.78h1M44.65 321.78h1" stroke="#fbc02d" stroke-width="1.3"/>
<path d="M39.01 336.20c-1.3 0-1.8 .6-1.8 1.8v2.85c0 .9-.5 1.4-1.3 1.4c.8 0 1.3 .5 1.3 1.4v2.85c0 1.2 .5 1.8 1.8 1.8M46.49 336.20c1.3 0 1.8 .6 1.8 1.8v2.85c0 .9 .5 1.4 1.3 1.4c-.8 0-1.3 .5-1.3 1.4v2.85c0 1.2-.5 1.8-1.8 1.8" fill="none" stroke="#fbc02d" stroke-width="1.4"/><path d="M39.85 343.78h1M42.25 343.78h1M44.65 343.78h1" stroke="#fbc02d" stroke-width="1.3"/>
<ellipse cx="42" cy="363.5" rx="7.5" ry="4.2" fill="#42a5f5"/>
<text x="42" y="365.8" font-size="6" font-style="italic" font-weight="bold" fill="#1b3b6e" text-anchor="middle" font-family="Liberation Sans">php</text>
<path d="M39.01 380.20c-1.3 0-1.8 .6-1.8 1.8v2.85c0 .9-.5 1.4-1.3 1.4c.8 0 1.3 .5 1.3 1.4v2.85c0 1.2 .5 1.8 1.8 1.8M46.49 380.20c1.3 0 1.8 .6 1.8 1.8v2.85c0 .9 .5 1.4 1.3 1.4c-.8 0-1.3 .5-1.3 1.4v2.85c0 1.2-.5 1.8-1.8 1.8" fill="none" stroke="#fbc02d" stroke-width="1.4"/><path d="M39.85 387.78h1M42.25 387.78h1M44.65 387.78h1" stroke="#fbc02d" stroke-width="1.3"/>
</svg>
<div class="t" style="left:56px;top:5px">@babel</div>
<div class="t" style="left:56px;top:27px">component</div>
<div class="t" style="left:56px;top:49px">components</div>
<div class="t" style="left:56px;top:71px">pages</div>
<div class="t" style="left:56px;top:93px">pagesA</div>
<div class="t" style="left:56px;top:115px">pagesB</div>
<div class="t" style="left:56px;top:137px">static</div>
<div class="t" style="left:56px;top:159px">utils</div>
<div class="t" style="left:56px;top:181px">把pages整个文件夹导...</div>
<div class="t" style="left:56px;top:203px">介绍.txt</div>
<div class="t" style="left:56px;top:225px">app.js</div>
<div class="t" style="left:56px;top:247px">app.json</div>
<div class="t" style="left:56px;top:269px">app.wxss</div>
<div class="t" style="left:56px;top:291px">code_obfuscation_conf...</div>
<div class="t" style="left:56px;top:313px">project.config.json</div>
<div class="t" style="left:56px;top:335px">project.private.config.js...</div>
<div class="t" style="left:56px;top:357px">readme.php</div>
<div class="t" style="left:56px;top:379px">sitemap.json</div>
</div>

<svg style="left:505px;top:997px" width="12" height="17"><path d="M4 5.5l4 3-4 3z" fill="#ccc"/></svg>
<div class="t" style="left:521px;top:1000px;font-size:11px;font-weight:bold;color:#dcdcdc">大纲</div>
<svg style="left:514px;top:1018px" width="60" height="18">
 <circle cx="8.5" cy="8.5" r="6" fill="none" stroke="#a0a0a0" stroke-width="1"/><path d="M6 6l5 5M11 6l-5 5" stroke="#a0a0a0" stroke-width="1"/>
 <path d="M35.5 2.5l6.5 11.5H29z" fill="none" stroke="#a0a0a0" stroke-width="1" stroke-linejoin="round"/><path d="M35.5 6.5v4M35.5 11.5v1" stroke="#a0a0a0" stroke-width="1"/>
</svg>
<div class="t" style="left:533px;top:1020px;font-size:12px;color:#a0a0a0">0</div>
<div class="t" style="left:560px;top:1020px;font-size:12px;color:#a0a0a0">0</div>

<!-- EDITOR -->
<div class="a" style="left:701px;top:92px;width:1219px;height:30px;background:#393939"></div>
<div class="a" style="left:701px;top:122px;width:1219px;height:590px;background:#2c2c2c"></div>
<div class="a" style="left:930px;top:92px;width:167px;height:30px;background:#2c2c2c"></div>
<div class="a" style="left:929px;top:92px;width:1px;height:30px;background:#2a2a2a"></div>
<div class="a" style="left:1097px;top:92px;width:1px;height:30px;background:#2a2a2a"></div>
<div class="a" style="left:1305px;top:92px;width:1px;height:30px;background:#2a2a2a"></div>
<svg style="left:700px;top:92px" width="440" height="30">
 <path d="M15.03 9.50c-1.3 0-1.8 .6-1.8 1.8v3.35c0 .9-.5 1.4-1.3 1.4c.8 0 1.3 .5 1.3 1.4v3.35c0 1.2 .5 1.8 1.8 1.8M23.07 9.50c1.3 0 1.8 .6 1.8 1.8v3.35c0 .9 .5 1.4 1.3 1.4c-.8 0-1.3 .5-1.3 1.4v3.35c0 1.2-.5 1.8-1.8 1.8" fill="none" stroke="#f5c242" stroke-width="1.5"/><path d="M16.15 17.80h1M18.55 17.80h1M20.95 17.80h1" stroke="#f5c242" stroke-width="1.3"/><path d="M244.23 9.50c-1.3 0-1.8 .6-1.8 1.8v3.35c0 .9-.5 1.4-1.3 1.4c.8 0 1.3 .5 1.3 1.4v3.35c0 1.2 .5 1.8 1.8 1.8M252.27 9.50c1.3 0 1.8 .6 1.8 1.8v3.35c0 .9 .5 1.4 1.3 1.4c-.8 0-1.3 .5-1.3 1.4v3.35c0 1.2-.5 1.8-1.8 1.8" fill="none" stroke="#f5c242" stroke-width="1.5"/><path d="M245.35 17.80h1M247.75 17.80h1M250.15 17.80h1" stroke="#f5c242" stroke-width="1.3"/><path d="M410.73 9.50c-1.3 0-1.8 .6-1.8 1.8v3.35c0 .9-.5 1.4-1.3 1.4c.8 0 1.3 .5 1.3 1.4v3.35c0 1.2 .5 1.8 1.8 1.8M418.77 9.50c1.3 0 1.8 .6 1.8 1.8v3.35c0 .9 .5 1.4 1.3 1.4c-.8 0-1.3 .5-1.3 1.4v3.35c0 1.2-.5 1.8-1.8 1.8" fill="none" stroke="#f5c242" stroke-width="1.5"/><path d="M411.85 17.80h1M414.25 17.80h1M416.65 17.80h1" stroke="#f5c242" stroke-width="1.3"/>
 <path d="M376 11l8 8M384 11l-8 8" stroke="#eee" stroke-width="1.3"/>
</svg>
<div class="t" id="tab1" style="top:101px;left:733px;font-size:13px;color:#a6a6a6;letter-spacing:-0.1px">code_obfuscation_config.json</div>
<div class="t" id="tab2" style="top:101px;left:962px;font-size:13px;color:#f2f2f2">project.config.json</div>
<div class="t" id="tab3" style="top:101px;left:1129px;font-size:13px;color:#a6a6a6">project.private.config.json</div>
<svg style="left:1815px;top:97px" width="100" height="20">
 <path d="M10.5 4.5h5l3 3v11h-9v-5" fill="none" stroke="#c8c8c8" stroke-width="1.1"/><path d="M15.5 4.5v3h3" fill="none" stroke="#c8c8c8" stroke-width="1"/>
 <path d="M11 6.5a3.5 3.5 0 0 0-4 0M8 5l-1.3 1.7L8.5 8" fill="none" stroke="#c8c8c8" stroke-width="1"/>
 <rect x="39.5" y="4.5" width="12" height="12" fill="none" stroke="#c8c8c8" stroke-width="1.2"/><path d="M45.5 4.5v12" stroke="#c8c8c8" stroke-width="1.2"/>
 <circle cx="72.5" cy="10.5" r="1" fill="#c8c8c8"/><circle cx="77.5" cy="10.5" r="1" fill="#c8c8c8"/><circle cx="82.5" cy="10.5" r="1" fill="#c8c8c8"/>
</svg>
<svg style="left:700px;top:122px" width="300" height="24">
 <path d="M12 11.5h11.5M12 14.5h11.5M12 17.5h11.5M12 20.5h11.5" stroke="#bbb" stroke-width="1.1" transform="translate(0,-5)"/><path d="M9 6.5h1.5M9 9.5h1.5M9 12.5h1.5M9 15.5h1.5" stroke="#999" stroke-width="1.1"/>
 <path d="M41.5 4.5h9v13l-4.5-4-4.5 4z" fill="none" stroke="#bbb" stroke-width="1.1"/>
 <path d="M69.5 11h12M74 6.5L69.5 11l4.5 4.5" fill="none" stroke="#bbb" stroke-width="1.1"/>
 <path d="M98.5 11h12M106 6.5l4.5 4.5-4.5 4.5" fill="none" stroke="#666" stroke-width="1.1"/>
 <path d="M130.23 5.70c-1.3 0-1.8 .6-1.8 1.8v3.35c0 .9-.5 1.4-1.3 1.4c.8 0 1.3 .5 1.3 1.4v3.35c0 1.2 .5 1.8 1.8 1.8M138.27 5.70c1.3 0 1.8 .6 1.8 1.8v3.35c0 .9 .5 1.4 1.3 1.4c-.8 0-1.3 .5-1.3 1.4v3.35c0 1.2-.5 1.8-1.8 1.8" fill="none" stroke="#f5c242" stroke-width="1.5"/><path d="M131.35 14.00h1M133.75 14.00h1M136.15 14.00h1" stroke="#f5c242" stroke-width="1.3"/>
 <path d="M260.5 7l4 4-4 4" fill="none" stroke="#bbb" stroke-width="1.1"/>
 <circle cx="273.5" cy="14.5" r=".8" fill="#aaa"/><circle cx="276.5" cy="14.5" r=".8" fill="#aaa"/><circle cx="279.5" cy="14.5" r=".8" fill="#aaa"/>
</svg>
<div class="t" id="bc" style="left:849px;top:127px;font-size:13px;color:#b8b8b8">project.config.json</div>
<!-- gutter -->
<div class="a" style="left:785px;top:144px;width:1px;height:568px;background:#4f4f4f"></div>
<div class="a" style="left:803px;top:240px;width:1px;height:472px;background:#444"></div>
<div class="a" style="left:821px;top:496px;width:1px;height:96px;background:#444"></div>
<div class="a" style="left:785px;top:144px;width:9px;height:32px;border:1px solid #8c8c8c;border-left:2px solid #b4b4b4;background:#2c372d"></div>
<svg style="left:760px;top:140px" width="24" height="340">
 <path d="M7 10l4.5 4.5L16 10M7 74l4.5 4.5L16 74M7 330l4.5 4.5L16 330" fill="none" stroke="#c0c0c0" stroke-width="1.2"/>
</svg>
<div class="a mono" style="left:701px;top:0;width:1px;height:1px"></div>
<div class="ln" style="top:145px">1</div>
<div class="ln" style="top:177px">2</div>
<div class="ln" style="top:209px">3</div>
<div class="ln" style="top:241px">4</div>
<div class="ln" style="top:273px">5</div>
<div class="ln" style="top:305px">6</div>
<div class="ln" style="top:337px">7</div>
<div class="ln" style="top:369px">8</div>
<div class="ln" style="top:401px">9</div>
<div class="ln" style="top:433px">10</div>
<div class="ln" style="top:465px">11</div>
<div class="ln" style="top:497px">12</div>
<div class="ln" style="top:529px">13</div>
<div class="ln" style="top:561px">14</div>
<div class="ln" style="top:593px">15</div>
<div class="ln" style="top:625px">16</div>
<div class="ln" style="top:657px">17</div>
<div class="ln" style="top:689px">18</div>
<div class="cl2" style="top:145px;left:785.5px"><span style="color:#ffd700">{</span></div>
<div class="cl2" style="top:177px;left:803.1px"><span style="color:#d4d4d4">"</span><span style="color:#e0dccf">compileType</span><span style="color:#d4d4d4">"</span><span style="color:#d4d4d4">: </span><span style="color:#d4d4d4">"</span><span style="color:#f0735a">miniprogram</span><span style="color:#d4d4d4">"</span><span style="color:#d4d4d4">,</span></div>
<div class="cl2" style="top:209px;left:803.1px"><span style="color:#d4d4d4">"</span><span style="color:#e0dccf">setting</span><span style="color:#d4d4d4">"</span><span style="color:#d4d4d4">: </span><span style="color:#da70d6">{</span></div>
<div class="cl2" style="top:241px;left:820.7px"><span style="color:#d4d4d4">"</span><span style="color:#9cdcfe">coverView</span><span style="color:#d4d4d4">"</span><span style="color:#d4d4d4">: </span><span style="color:#f0735a">true</span><span style="color:#d4d4d4">,</span></div>
<div class="cl2" style="top:273px;left:820.7px"><span style="color:#d4d4d4">"</span><span style="color:#9cdcfe">es6</span><span style="color:#d4d4d4">"</span><span style="color:#d4d4d4">: </span><span style="color:#f0735a">false</span><span style="color:#d4d4d4">,</span></div>
<div class="cl2" style="top:305px;left:820.7px"><span style="color:#d4d4d4">"</span><span style="color:#9cdcfe">postcss</span><span style="color:#d4d4d4">"</span><span style="color:#d4d4d4">: </span><span style="color:#f0735a">false</span><span style="color:#d4d4d4">,</span></div>
<div class="cl2" style="top:337px;left:820.7px"><span style="color:#d4d4d4">"</span><span style="color:#9cdcfe">minified</span><span style="color:#d4d4d4">"</span><span style="color:#d4d4d4">: </span><span style="color:#f0735a">true</span><span style="color:#d4d4d4">,</span></div>
<div class="cl2" style="top:369px;left:820.7px"><span style="color:#d4d4d4">"</span><span style="color:#9cdcfe">enhance</span><span style="color:#d4d4d4">"</span><span style="color:#d4d4d4">: </span><span style="color:#f0735a">false</span><span style="color:#d4d4d4">,</span></div>
<div class="cl2" style="top:401px;left:820.7px"><span style="color:#d4d4d4">"</span><span style="color:#9cdcfe">showShadowRootInWxmlPanel</span><span style="color:#d4d4d4">"</span><span style="color:#d4d4d4">: </span><span style="color:#f0735a">true</span><span style="color:#d4d4d4">,</span></div>
<div class="cl2" style="top:433px;left:820.7px"><span style="color:#d4d4d4">"</span><span style="color:#9cdcfe">packNpmRelationList</span><span style="color:#d4d4d4">"</span><span style="color:#d4d4d4">: </span><span style="color:#a9d2f2">[]</span><span style="color:#d4d4d4">,</span></div>
<div class="cl2" style="top:465px;left:820.7px"><span style="color:#d4d4d4">"</span><span style="color:#9cdcfe">babelSetting</span><span style="color:#d4d4d4">"</span><span style="color:#d4d4d4">: </span><span style="color:#a9d2f2">{</span></div>
<div class="cl2" style="top:497px;left:838.3px"><span style="color:#d4d4d4">"</span><span style="color:#ef8f5d">ignore</span><span style="color:#d4d4d4">"</span><span style="color:#d4d4d4">: </span><span style="color:#ffd700">[]</span><span style="color:#d4d4d4">,</span></div>
<div class="cl2" style="top:529px;left:838.3px"><span style="color:#d4d4d4">"</span><span style="color:#ef8f5d">disablePlugins</span><span style="color:#d4d4d4">"</span><span style="color:#d4d4d4">: </span><span style="color:#ffd700">[]</span><span style="color:#d4d4d4">,</span></div>
<div class="cl2" style="top:561px;left:838.3px"><span style="color:#d4d4d4">"</span><span style="color:#ef8f5d">outputPath</span><span style="color:#d4d4d4">"</span><span style="color:#d4d4d4">: </span><span style="color:#d4d4d4">""</span></div>
<div class="cl2" style="top:593px;left:820.7px"><span style="color:#a9d2f2">}</span><span style="color:#d4d4d4">,</span></div>
<div class="cl2" style="top:625px;left:820.7px"><span style="color:#d4d4d4">"</span><span style="color:#9cdcfe">ignoreUploadUnusedFiles</span><span style="color:#d4d4d4">"</span><span style="color:#d4d4d4">: </span><span style="color:#f0735a">false</span><span style="color:#d4d4d4">,</span></div>
<div class="cl2" style="top:657px;left:820.7px"><span style="color:#d4d4d4">"</span><span style="color:#9cdcfe">ignoreDevUnusedFiles</span><span style="color:#d4d4d4">"</span><span style="color:#d4d4d4">: </span><span style="color:#f0735a">false</span><span style="color:#d4d4d4">,</span></div>
<div class="cl2" style="top:689px;left:820.7px"><span style="color:#d4d4d4">"</span><span style="color:#9cdcfe">minifyWXML</span><span style="color:#d4d4d4">"</span><span style="color:#d4d4d4">: </span><span style="color:#f0735a">true</span><span style="color:#d4d4d4">,</span></div>
<!-- scrollbar -->
<div class="a" style="left:1905px;top:143px;width:1px;height:569px;background:#3c3c3c"></div>
<div class="a" style="left:1906px;top:143px;width:14px;height:201px;background:#3b3b3b"></div>
<div class="a" style="left:1910px;top:145px;width:4px;height:10px;background:#8a8a8a"></div>
<!-- sogou bar -->
<div class="a" style="left:1760px;top:505px;width:160px;height:26px;background:#fff;border-radius:2px;border:1px solid #d8e4f4"></div>
<svg style="left:1740px;top:500px" width="180" height="36">
 <path d="M5 8.5l22-4.5c2.5-.5 4.5 1 5 3.5l3 17c.5 2.5-1 4.5-3.5 5l-20 3.5c-2.5.5-4.5-1-5-3.5L3 12c-.5-2 .5-3.3 2-3.5z" fill="#f05a24"/>
 <path d="M24 12c-3-2-9-1.5-10 1.5-1.5 4.5 9 3.5 8 8.5-1 4-8 4-11 1.5" fill="none" stroke="#fff" stroke-width="3.2" stroke-linecap="round"/>
 <g fill="#1b6fd6">
 <path d="M41 14h12.5v7.2H41zM47.2 11.8v14" fill="none" stroke="#1b6fd6" stroke-width="1.7"/>
 <circle cx="66.5" cy="15.5" r="1.8"/><path d="M72 17.5c2.5 0 2.5 3-.5 5l-.8-.7c1.5-1 1.6-2 .3-2.4z"/>
 <rect x="92" y="11" width="5" height="10" rx="2.5"/><path d="M90 17.5a4.5 4.5 0 0 0 9 0M94.5 22v3M92 25h5" fill="none" stroke="#1b6fd6" stroke-width="1.4"/>
 <rect x="112" y="13" width="14" height="10" rx="1"/><path d="M114 15h2v2h-2zM117 15h2v2h-2zM120 15h2v2h-2zM123 15h1.5v2H123zM114 18h2v2h-2zM117 18h2v2h-2zM120 18h2v2h-2zM123 18h1.5v2H123z" fill="#fff"/>
 <path d="M137 13l4-2c1 1.5 4 1.5 5 0l4 2 2 4-3 1.5V26h-11v-7.5L135 17z"/>
 <path d="M160 11h5v5h-5zM166.5 11h5v5h-5zM160 17.5h5v5h-5zM166.5 17.5h5v5h-5z"/>
 </g>
</svg>

<!-- DEBUGGER -->
<div class="a" style="left:701px;top:711px;width:1219px;height:1px;background:#3d3d3d"></div>
<div class="a" style="left:701px;top:712px;width:1219px;height:28px;background:#343434"></div>
<div class="t" style="left:721px;top:721px;font-size:11.5px;color:#9a9a9a">构建</div>
<div class="t" style="left:763px;top:721px;font-size:11.5px;color:#f0f0f0">调试器</div>
<div class="a" style="left:763px;top:739px;width:33px;height:1px;background:#f0f0f0"></div>
<div class="a" style="left:804px;top:717.5px;width:18px;height:18px;border-radius:9px;background:#4a4a4a"></div>
<div class="t" style="left:804px;top:721px;width:18px;text-align:center;font-size:11px;color:#ddd">3</div>
<div class="t" style="left:841px;top:721px;font-size:11.5px;color:#9a9a9a">问题</div>
<div class="t" style="left:883px;top:721px;font-size:11.5px;color:#9a9a9a">输出</div>
<div class="t" style="left:925px;top:721px;font-size:11.5px;color:#9a9a9a">终端</div>
<div class="t" style="left:967px;top:721px;font-size:11.5px;color:#9a9a9a">代码质量</div>
<svg style="left:1850px;top:717px" width="60" height="20"><path d="M5 13l5-5 5 5" fill="none" stroke="#ddd" stroke-width="1.3"/><path d="M38 5l10 10M48 5l-10 10" stroke="#ddd" stroke-width="1.3"/></svg>
<!-- devtools tabs -->
<div class="a" style="left:701px;top:740px;width:1219px;height:26px;background:#292a2d"></div>
<div class="a" style="left:701px;top:766px;width:1219px;height:1px;background:#3d3d3d"></div>
<svg style="left:705px;top:744px" width="40" height="20">
 <path d="M10 14.5H5.5v-10h12v4" fill="none" stroke="#9a9a9a" stroke-width="1.2"/><path d="M10 8.5l8 3-3.3 1.2 3 3-1.3 1.3-3-3L12.2 17z" fill="#9a9a9a"/>
 <path d="M30.5 2v17" stroke="#444" stroke-width="1"/>
</svg>
<div class="a" style="left:742px;top:740px;width:54px;height:26px;background:#000"></div>
<div class="dt" style="left:754px">Wxml</div>
<div class="dt" style="left:807px">Console</div>
<div class="dt" style="left:873.5px">Sources</div>
<div class="dt" style="left:938px">Network</div>
<div class="dt" style="left:1007px">Performance</div>
<div class="dt" style="left:1097.5px">Memory</div>
<div class="dt" style="left:1165px">AppData</div>
<div class="dt" style="left:1235px">Storage</div>
<div class="dt" style="left:1299px">Security</div>
<div class="dt" style="left:1374px">Sensor</div>
<div class="dt" style="left:1433.5px">Mock</div>
<div class="dt" style="left:1486.5px">Audits</div>
<div class="dt" style="left:1543.5px">Vulnerability</div>
<svg style="left:1790px;top:743px" width="130" height="22">
 <path d="M13.5 4.5l5.2 9.5H8.3z" fill="#f5b400" stroke="#f5b400" stroke-width="1.2" stroke-linejoin="round"/><path d="M13.5 7.5v3.5M13.5 12v1" stroke="#2a2a2a" stroke-width="1.2"/>
 <path d="M39.5 2v17" stroke="#444" stroke-width="1"/>
 <path d="M62.47 8.80 L64.51 8.86 L64.51 11.14 L62.47 11.20 L62.17 12.14 L61.72 13.02 L63.12 14.50 L61.50 16.12 L60.02 14.72 L59.14 15.17 L58.20 15.47 L58.14 17.51 L55.86 17.51 L55.80 15.47 L54.86 15.17 L53.98 14.72 L52.50 16.12 L50.88 14.50 L52.28 13.02 L51.83 12.14 L51.53 11.20 L49.49 11.14 L49.49 8.86 L51.53 8.80 L51.83 7.86 L52.28 6.98 L50.88 5.50 L52.50 3.88 L53.98 5.28 L54.86 4.83 L55.80 4.53 L55.86 2.49 L58.14 2.49 L58.20 4.53 L59.14 4.83 L60.02 5.28 L61.50 3.88 L63.12 5.50 L61.72 6.98 L62.17 7.86z" fill="#9a9a9a"/><circle cx="57" cy="10" r="2.6" fill="#292a2d"/>
 <circle cx="85.5" cy="5.5" r="1.3" fill="#9a9a9a"/><circle cx="85.5" cy="10" r="1.3" fill="#9a9a9a"/><circle cx="85.5" cy="14.5" r="1.3" fill="#9a9a9a"/>
 <path d="M109 4.5h12v8.5h-12z" fill="none" stroke="#9a9a9a" stroke-width="1.8"/><path d="M106.5 7.5v8h12" fill="none" stroke="#9a9a9a" stroke-width="1.8"/>
</svg>
<div class="t" style="left:1811px;top:748px;font-size:12.5px;color:#e0e0e0">3</div>
<!-- wxml panel -->
<div class="a" style="left:701px;top:767px;width:879px;height:60px;background:#242424"></div>
<div class="a" style="left:1580px;top:767px;width:14px;height:60px;background:#262626"></div>
<div class="a" style="left:1581px;top:768px;width:12px;height:17px;background:#3c3c3c;border-radius:1px"></div>
<div class="a" style="left:701px;top:827px;width:893px;height:23px;background:#242424"></div>
<div class="a" style="left:701px;top:767px;width:879px;height:60px;overflow:hidden">
 <div class="wx" style="left:13.5px;top:6.5px"><span class="tg">&lt;page&gt;</span></div>
 <div class="wx" style="left:25px;top:23.5px"><span class="tg">&lt;view </span><span class="an">class</span><span class="tg">=</span><span class="av">"notice-wrap"</span><span class="tg">&gt;</span><span style="color:#ddd">…</span><span class="tg">&lt;/view&gt;</span></div>
 <div class="wx" style="left:25px;top:40.5px"><span class="tg">&lt;view </span><span class="an">class</span><span class="tg">=</span><span class="av">"container"</span><span class="tg">&gt;</span><span style="color:#ddd">…</span><span class="tg">&lt;/view&gt;</span></div>
 <div class="wx" style="left:25px;top:57.5px"><span class="tg">&lt;view </span><span class="an">class</span><span class="tg">=</span><span class="av">"cu-tabbar"</span><span class="tg">&gt;</span></div>
 <svg style="left:16px;top:20.5px" width="8" height="40"><path d="M1 3l5 4-5 4zM1 20l5 4-5 4zM1 37l5 4-5 4z" fill="#9a9a9a"/></svg>
</div>
<div class="a" style="left:701px;top:827px;width:893px;height:1px;background:#4a4a4a"></div>
<!-- styles pane -->
<div class="a" style="left:1594px;top:767px;width:1px;height:83px;background:#3d3d3d"></div>
<div class="a" style="left:1595px;top:767px;width:325px;height:26px;background:#292a2d"></div>
<div class="a" style="left:1595px;top:793px;width:325px;height:1px;background:#3d3d3d"></div>
<div class="a" style="left:1595px;top:767px;width:50px;height:26px;background:#000"></div>
<div class="dt" style="left:1604.5px;top:776px">Styles</div>
<div class="dt" style="left:1654px;top:776px">Computed</div>
<div class="dt" style="left:1730.5px;top:776px">Dataset</div>
<div class="dt" style="left:1790.5px;top:776px">Component Data</div>
<svg style="left:1896px;top:774px" width="14" height="12"><path d="M2 2l4 4-4 4M7 2l4 4-4 4" fill="none" stroke="#ccc" stroke-width="1.2"/></svg>
<div class="a" style="left:1595px;top:794px;width:325px;height:27px;background:#242424"></div>
<div class="a" style="left:1598px;top:797px;width:250px;height:20px;background:#1e1e1e"></div>
<div class="t" style="left:1602px;top:801px;font-size:12px;color:#8a8a8a">Filter</div>
<div class="t" style="left:1858px;top:800px;font-family:'Liberation Mono',monospace;font-size:12.5px;font-weight:bold;color:#e0e0e0">.cls</div>
<svg style="left:1898px;top:798px" width="22" height="22"><path d="M8.5 4v11M3 9.5h11" stroke="#666" stroke-width="1.2"/><path d="M16 17l3-3v3z" fill="#555"/></svg>
<div class="a" style="left:1595px;top:821px;width:325px;height:29px;background:#242424"></div>
<div class="a" style="left:1595px;top:821px;width:325px;height:1px;background:#2e2e2e"></div>
<div class="a" style="left:701px;top:850px;width:1219px;height:1px;background:#4a4a4a"></div>
<!-- console drawer -->
<div class="a" style="left:701px;top:851px;width:1219px;height:26px;background:#292a2d"></div>
<div class="a" style="left:701px;top:877px;width:1219px;height:1px;background:#3d3d3d"></div>
<svg style="left:712px;top:857px" width="10" height="16"><circle cx="5" cy="2.5" r="1.3" fill="#9a9a9a"/><circle cx="5" cy="7" r="1.3" fill="#9a9a9a"/><circle cx="5" cy="11.5" r="1.3" fill="#9a9a9a"/></svg>
<div class="a" style="left:729px;top:851px;width:62px;height:26px;background:#000"></div>
<div class="dt" style="left:738.5px;top:860px">Console</div>
<div class="dt" style="left:801px;top:860px">Task</div>
<svg style="left:1895px;top:856px" width="16" height="16"><path d="M3.5 3.5l9 9M12.5 3.5l-9 9" stroke="#ccc" stroke-width="1.4"/></svg>
<div class="a" style="left:701px;top:878px;width:1219px;height:26px;background:#292a2d"></div>
<div class="a" style="left:701px;top:904px;width:1219px;height:1px;background:#3d3d3d"></div>
<svg style="left:705px;top:881px" width="260" height="20">
 <rect x="4" y="3.5" width="14.5" height="12.5" fill="none" stroke="#9a9a9a" stroke-width="1.2"/><path d="M7.5 3.5v12.5" stroke="#9a9a9a" stroke-width="1.2"/><path d="M10.5 6.5l5 3.3-5 3.3z" fill="#9a9a9a"/>
 <circle cx="40.5" cy="10" r="5.5" fill="none" stroke="#9a9a9a" stroke-width="1.6"/><path d="M36.5 6l8 8" stroke="#9a9a9a" stroke-width="1.6"/>
 <path d="M58.5 2.5v15M205.5 2.5v15M242.5 2.5v15" stroke="#3f3f3f" stroke-width="1"/>
 <path d="M189 6.5h7l-3.5 6z" fill="#9a9a9a"/>
 <path d="M216 10c2.5-3.5 5-5 8-5s5.5 1.5 8 5c-2.5 3.5-5 5-8 5s-5.5-1.5-8-5z" fill="#9a9a9a"/><circle cx="224" cy="10" r="2.3" fill="#292a2d"/><circle cx="224" cy="10" r="1" fill="#9a9a9a"/>
</svg>
<div class="dt" style="left:773px;top:886px;letter-spacing:-.2px">appservice (#2)</div>
<div class="a" style="left:954px;top:881px;width:251px;height:21px;background:#202124;border:1px solid #454545"></div>
<div class="t" style="left:958px;top:886px;font-size:12.5px;color:#9aa0a6">Filter</div>
<div class="dt" style="left:1213px;top:886px;letter-spacing:-.3px">Default levels</div>
<svg style="left:1288px;top:886px" width="10" height="10"><path d="M1 1.5h7l-3.5 6z" fill="#9a9a9a"/></svg>
<div class="a" style="left:1826px;top:881px;width:1px;height:20px;background:#3f3f3f"></div>
<div class="t" style="left:1838px;top:885px;font-size:12px;color:#9a9a9a">1 hidden</div>
<svg style="left:1894px;top:883px" width="18" height="18"><path d="M14.27 7.84 L16.32 7.89 L16.32 10.11 L14.27 10.16 L13.99 11.07 L13.55 11.91 L14.96 13.38 L13.38 14.96 L11.91 13.55 L11.07 13.99 L10.16 14.27 L10.11 16.32 L7.89 16.32 L7.84 14.27 L6.93 13.99 L6.09 13.55 L4.62 14.96 L3.04 13.38 L4.45 11.91 L4.01 11.07 L3.73 10.16 L1.68 10.11 L1.68 7.89 L3.73 7.84 L4.01 6.93 L4.45 6.09 L3.04 4.62 L4.62 3.04 L6.09 4.45 L6.93 4.01 L7.84 3.73 L7.89 1.68 L10.11 1.68 L10.16 3.73 L11.07 4.01 L11.91 4.45 L13.38 3.04 L14.96 4.62 L13.55 6.09 L13.99 6.93z" fill="#9a9a9a"/><circle cx="9" cy="9" r="2.5" fill="#292a2d"/></svg>
<!-- console messages -->
<div class="a" style="left:701px;top:905px;width:1219px;height:107px;background:#242424;overflow:hidden">
 <div class="cm" style="left:24.5px;top:-4px">[system] LazyCodeLoading: false</div>
 <div class="cm lk" style="left:911px;top:-4px">WAServiceMainContext…52181553&amp;v=2.25.1:1</div>
 <div class="a" style="left:0;top:10px;width:1205px;height:41px;background:#332b00;border-top:1px solid #665500;border-bottom:1px solid #665500"></div>
 <div class="a" style="left:0;top:30px;width:1205px;height:1px;background:#665500"></div>
 <div class="cm" style="left:34.5px;top:17px;color:#f0e6c8">[Component] the type of property "isCustom" is illegal (when preparing "component/colorui/colorui").</div>
 <div class="cm lk" style="left:911px;top:17px">WASubContext.js?t=we…52181553&amp;v=2.25.1:1</div>
 <div class="cm" style="left:34.5px;top:37px;color:#f0e6c8">[Component] the type of property "isBack" is illegal (when preparing "component/colorui/colorui").</div>
 <div class="cm lk" style="left:911px;top:37px">WASubContext.js?t=we…52181553&amp;v=2.25.1:1</div>
 <div class="cm" style="left:24.5px;top:57px">[system] Launch Time: 1365 ms</div>
 <div class="cm lk" style="left:911px;top:57px">WAServiceMainContext…52181553&amp;v=2.25.1:1</div>
 <div class="a" style="left:0;top:70px;width:1205px;height:1px;background:#383838"></div>
 <svg style="left:0;top:0" width="40" height="100">
  <path d="M12 15l5.5 9.5h-11z" fill="#f5b400" stroke="#f5b400" stroke-width="1.2" stroke-linejoin="round"/><path d="M12 18.2v3M12 22.3v1" stroke="#332b00" stroke-width="1.3"/>
  <path d="M12 35l5.5 9.5h-11z" fill="#f5b400" stroke="#f5b400" stroke-width="1.2" stroke-linejoin="round"/><path d="M12 38.2v3M12 42.3v1" stroke="#332b00" stroke-width="1.3"/>
  <path d="M26 17.5l4.5 3-4.5 3zM26 37.5l4.5 3-4.5 3z" fill="#9a9a9a"/>
  <path d="M10.5 77l4 3.5-4 3.5" fill="none" stroke="#3e88f5" stroke-width="1.5"/>
 </svg>
 <div class="a" style="left:1205px;top:0;width:14px;height:107px;background:#262626"></div>
 <div class="a" style="left:1206px;top:42px;width:12px;height:64px;background:#353535;border-radius:2px"></div>
</div>
<!-- status bar right -->
<div class="t" style="left:1683px;top:1020px;font-size:12px;color:#a0a0a0">行 1，列 1</div>
<div class="t" style="left:1754.5px;top:1020px;font-size:12px;color:#a0a0a0">空格: 2</div>
<div class="t" style="left:1807.5px;top:1020px;font-size:12px;color:#a0a0a0;letter-spacing:-.4px">UTF-8</div>
<div class="t" style="left:1855px;top:1020px;font-size:12px;color:#a0a0a0;letter-spacing:-.8px">LF</div>
<div class="t" style="left:1882px;top:1020px;font-size:12px;color:#a0a0a0;letter-spacing:-.7px">JSON</div>
</body></html>
